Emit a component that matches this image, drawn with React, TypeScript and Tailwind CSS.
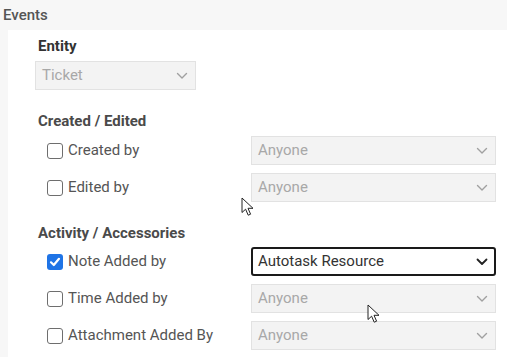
import React from "react";

const font = { fontFamily: "Roboto, 'Liberation Sans', sans-serif" };

function Chevron({ dark }: { dark?: boolean }) {
  return (
    <svg width="12" height="8" viewBox="0 0 12 8" className="shrink-0">
      <path
        d="M1.5 1.5 L6 6 L10.5 1.5"
        fill="none"
        stroke={dark ? "#222" : "#a0a0a0"}
        strokeWidth={dark ? 1.8 : 1.4}
        strokeLinecap="round"
        strokeLinejoin="round"
      />
    </svg>
  );
}

function Select({ value, active, width }: { value: string; active?: boolean; width?: string }) {
  if (active) {
    return (
      <div className={`flex h-[29px] items-center justify-between rounded-[3px] border-2 border-[#1a1a1a] bg-white pl-[5px] pr-[6px] ${width ?? "w-[245px]"}`}>
        <span className="text-[15px] text-[#333]">{value}</span>
        <Chevron dark />
      </div>
    );
  }
  return (
    <div className={`flex h-[29px] items-center justify-between border border-[#e2e2e2] bg-[#f3f3f3] pl-[6px] pr-[7px] ${width ?? "w-[245px]"}`}>
      <span className="text-[15px] text-[#a8a8a8]">{value}</span>
      <Chevron />
    </div>
  );
}

function Checkbox({ checked }: { checked?: boolean }) {
  if (checked) {
    return (
      <div className="flex h-[16px] w-[16px] items-center justify-center rounded-[3px] bg-[#1f74e6]">
        <svg width="12" height="12" viewBox="0 0 12 12">
          <path d="M2 6.3 L4.8 9 L10 2.8" fill="none" stroke="#fff" strokeWidth="2.2" strokeLinecap="round" strokeLinejoin="round" />
        </svg>
      </div>
    );
  }
  return <div className="h-[16px] w-[16px] rounded-[3px] border-[1.5px] border-[#6e6e6e] bg-white" />;
}

function Row({ label, value, checked }: { label: string; value: string; checked?: boolean }) {
  return (
    <div className="flex h-[29px] items-center">
      <div className="flex w-[216px] items-center gap-[5px] pl-[12px]">
        <Checkbox checked={checked} />
        <span className="text-[15px] text-[#555]">{label}</span>
      </div>
      <Select value={value} active={checked} />
    </div>
  );
}

function Cursor() {
  return (
    <svg width="14" height="20" viewBox="0 0 14 20">
      <path d="M1 1 L1 15.5 L4.6 12.2 L7.2 18.2 L9.6 17.2 L7 11.3 L12 11.3 Z" fill="#fff" stroke="#222" strokeWidth="1" strokeLinejoin="round" />
    </svg>
  );
}

const rows = {
  created: [
    { label: "Created by", value: "Anyone" },
    { label: "Edited by", value: "Anyone" },
  ],
  activity: [
    { label: "Note Added by", value: "Autotask Resource", checked: true },
    { label: "Time Added by", value: "Anyone" },
    { label: "Attachment Added By", value: "Anyone" },
  ],
};

export default function App() {
  return (
    <main className="relative h-[357px] w-[507px] overflow-hidden bg-[#f7f7f7]" style={font}>
      <div className="h-[30px] pl-[3px] pt-[5px] text-[15px] font-medium leading-[20px] text-[#555]">Events</div>

      <section className="ml-[8px] h-[327px] bg-white pl-[27px] pt-[6px]">
        <div className="ml-[3px] text-[15px] font-bold leading-[20px] text-[#333]">Entity</div>
        <div className="mt-[5px]">
          <Select value="Ticket" width="w-[161px]" />
        </div>

        <div className="ml-[3px] mt-[21px] text-[15px] font-bold leading-[20px] text-[#4a4a4a]">Created / Edited</div>
        <div className="mt-[5px] flex flex-col gap-[8px]">
          {rows.created.map((r) => (
            <Row key={r.label} {...r} />
          ))}
        </div>

        <div className="ml-[3px] mt-[21px] text-[15px] font-bold leading-[20px] text-[#4a4a4a]">Activity / Accessories</div>
        <div className="mt-[4px] flex flex-col gap-[8px]">
          {rows.activity.map((r) => (
            <Row key={r.label} {...r} />
          ))}
        </div>
      </section>

      <div className="absolute left-[241px] top-[197px]">
        <Cursor />
      </div>
      <div className="absolute left-[367px] top-[304px]">
        <Cursor />
      </div>
    </main>
  );
}
